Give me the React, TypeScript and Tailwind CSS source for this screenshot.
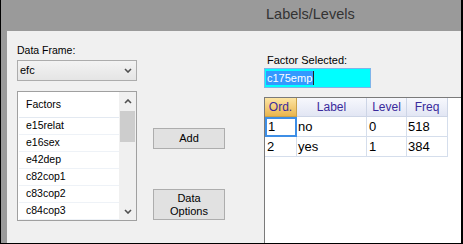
const items = ['e15relat', 'e16sex', 'e42dep', 'c82cop1', 'c83cop2', 'c84cop3']

const rows = [
  { ord: '1', label: 'no', level: '0', freq: '518' },
  { ord: '2', label: 'yes', level: '1', freq: '384' },
]

function Chevron({ up }: { up?: boolean }) {
  return (
    <svg width="8" height="5" viewBox="0 0 8 5" className="block">
      <polyline
        points={up ? '1,4 4,1 7,4' : '1,1 4,4 7,1'}
        fill="none"
        stroke="#505050"
        strokeWidth="1.6"
      />
    </svg>
  )
}

export default function App() {
  return (
    <div className="w-[463px] h-[244px] flex flex-col bg-[#9a9a9a] border-l border-r-2 border-b border-black font-['Liberation_Sans',Arial,sans-serif] text-black overflow-hidden">
      {/* Title bar */}
      <div className="h-[31px] shrink-0 flex items-center pl-[265px] pb-[1px] text-[14.5px] text-[#333]">
        Labels/Levels
      </div>

      <div className="flex-1 min-h-0 flex ml-[6px] bg-[#f0f0f0]">
        {/* Left column */}
        <div className="ml-[10px] w-[120px] shrink-0 flex flex-col pt-[13px]">
          <div className="h-[13px] text-[10.5px] leading-[13px]">Data Frame:</div>
          <div className="mt-[3px] h-[21px] border border-[#acacac] bg-gradient-to-b from-[#f3f3f3] to-[#e5e5e5] flex items-center justify-between pl-[2px] pr-[4px] text-[11px]">
            <span>efc</span>
            <Chevron />
          </div>
          <div className="mt-[10px] h-[130px] border border-[#a0a0a0] bg-white flex">
            <div className="flex-1 flex flex-col pl-[1px]">
              <div className="h-[26px] shrink-0 flex items-center pl-[7px] pt-[1px] border-b border-[#e3e9f1] text-[10.5px]">
                Factors
              </div>
              {items.map((it) => (
                <div
                  key={it}
                  className="h-[17px] shrink-0 flex items-center pl-[7px] border-b border-[#eef2f7] text-[10.5px]"
                >
                  {it}
                </div>
              ))}
            </div>
            <div className="w-[17px] shrink-0 bg-[#f0f0f0] flex flex-col">
              <div className="h-[18px] flex items-center justify-center">
                <Chevron up />
              </div>
              <div className="mt-[1px] mx-[1px] h-[31px] bg-[#cdcdcd]" />
              <div className="flex-1" />
              <div className="h-[17px] flex items-center justify-center">
                <Chevron />
              </div>
            </div>
          </div>
        </div>

        {/* Buttons */}
        <div className="ml-[16px] w-[72px] shrink-0 flex flex-col pt-[97px]">
          <button className="h-[21px] border border-[#adadad] bg-[#e1e1e1] text-[11px] leading-[13px]">
            Add
          </button>
          <button className="mt-[40px] h-[31px] border border-[#adadad] bg-[#e1e1e1] text-[11px] leading-[13px]">
            Data
            <br />
            Options
          </button>
        </div>

        {/* Right column */}
        <div className="ml-[39px] flex-1 min-w-0 flex flex-col pt-[23px]">
          <div className="h-[13px] pl-[3px] text-[11px] leading-[13px]">Factor Selected:</div>
          <div className="mt-[1px] w-[107px] h-[20px] border border-[#7eb4ea] bg-[#00ffff] flex items-center pl-[1px]">
            <span className="h-[14px] bg-[#3399ff] text-white text-[11px] leading-[14px] pl-[1px] pr-[1px]">
              c175emp
            </span>
            <span className="w-[1px] h-[14px] bg-[#222]" />
          </div>

          <div className="mt-[9px] flex-1 bg-white border-t border-l border-[#7a7a7a]">
            <div className="flex h-[19px] text-[12px] text-[#3a2a9c]">
              <div className="w-[32px] flex items-center justify-center border-r border-b border-[#c9a24a] bg-gradient-to-b from-[#fde5a2] to-[#e9b54c]">
                Ord.
              </div>
              <div className="w-[70px] flex items-center justify-center border-r border-b border-[#cdd5e6] bg-gradient-to-b from-[#f7f8fd] to-[#e2e6f4]">
                Label
              </div>
              <div className="w-[40px] flex items-center justify-center border-r border-b border-[#cdd5e6] bg-gradient-to-b from-[#f7f8fd] to-[#e2e6f4]">
                Level
              </div>
              <div className="w-[41px] flex items-center justify-center border-r border-b border-[#cdd5e6] bg-gradient-to-b from-[#f7f8fd] to-[#e2e6f4]">
                Freq
              </div>
            </div>
            {rows.map((r, i) => (
              <div key={r.ord} className="flex h-[20px] text-[13px] leading-[16px]">
                <div
                  className={
                    i === 0
                      ? 'w-[32px] border-2 border-[#3d8ee6] pl-[1px] flex items-center'
                      : 'w-[32px] border-r border-b border-[#d5deec] pl-[2px] flex items-center'
                  }
                >
                  {r.ord}
                </div>
                <div className="w-[70px] border-r border-b border-[#d5deec] pl-[1px] flex items-center">
                  {r.label}
                </div>
                <div className="w-[40px] border-r border-b border-[#d5deec] pl-[2px] flex items-center">
                  {r.level}
                </div>
                <div className="w-[41px] border-r border-b border-[#d5deec] pl-[1px] flex items-center">
                  {r.freq}
                </div>
              </div>
            ))}
          </div>
        </div>
      </div>
    </div>
  )
}
